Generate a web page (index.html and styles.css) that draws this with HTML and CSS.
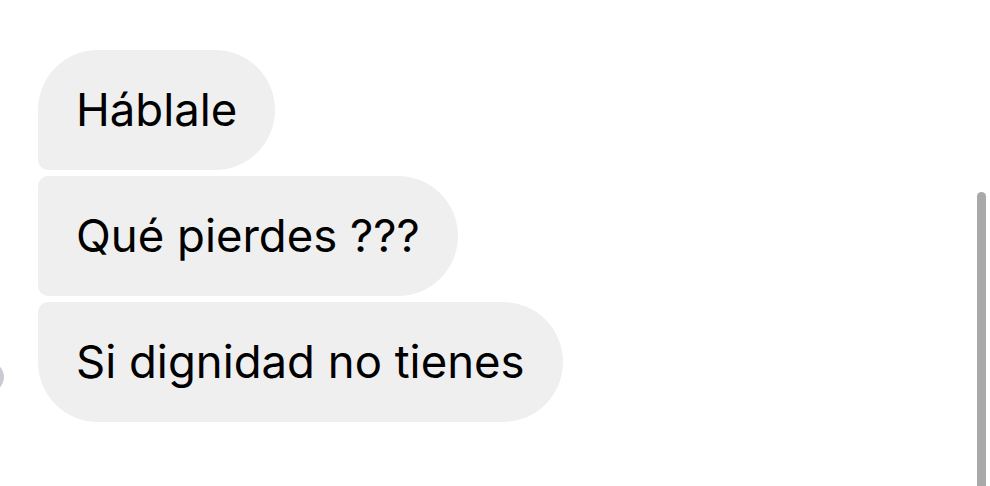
FILE: index.html
```html
<!DOCTYPE html>
<html lang="es">
<head>
    <meta charset="UTF-8">
    <meta name="viewport" content="width=device-width, initial-scale=1.0">
    <title>Chat</title>
    <link rel="stylesheet" href="styles.css">
</head>
<body>

<div class="chat">
    <div class="avatar"></div>
    <div class="group">
        <div class="bubble first">Háblale</div>
        <div class="bubble middle">Qué pierdes ???</div>
        <div class="bubble last">Si dignidad no tienes</div>
    </div>
    <div class="scrollbar"></div>
</div>

</body>
</html>
```

FILE: styles.css
```css
html, body {
    margin: 0;
    background: #fff;
}
body {
    font-family: Inter, "Noto Sans", sans-serif;
    color: #000;
}
.chat {
    position: relative;
    width: 990px;
    height: 486px;
    overflow: hidden;
    padding: 50px 0 0 38px;
    box-sizing: border-box;
}
.group {
    display: flex;
    flex-direction: column;
    align-items: flex-start;
    gap: 6px;
}
.bubble {
    background: #efefef;
    height: 120px;
    line-height: 120px;
    padding: 0 38px;
    font-size: 45.5px;
    border-radius: 60px;
    white-space: nowrap;
}
.bubble.first {
    border-bottom-left-radius: 10px;
}
.bubble.middle {
    border-top-left-radius: 10px;
    border-bottom-left-radius: 10px;
}
.bubble.last {
    border-top-left-radius: 10px;
}
.avatar {
    position: absolute;
    left: -36px;
    top: 360px;
    width: 40px;
    height: 34px;
    border-radius: 50%;
    background: #6a6680;
    opacity: 0.35;
}
.scrollbar {
    position: absolute;
    left: 977px;
    top: 192px;
    width: 9px;
    height: 320px;
    border-radius: 5px;
    background: #a9a9a9;
}
```
